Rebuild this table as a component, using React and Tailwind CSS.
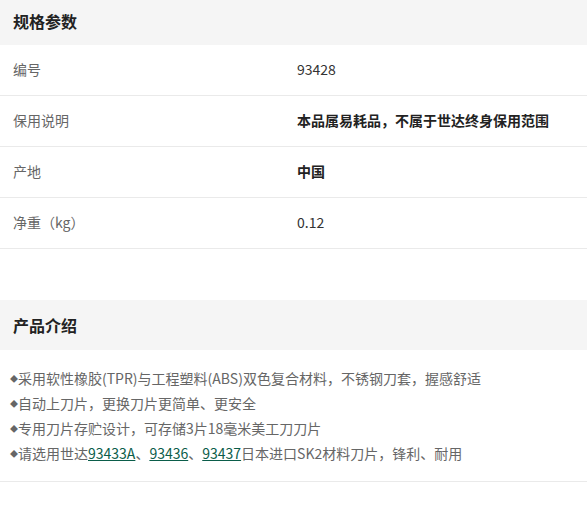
export default function App() {
  const rows = [
    ["编号", "93428", false],
    ["保用说明", "本品属易耗品，不属于世达终身保用范围", true],
    ["产地", "中国", true],
    ["净重（kg）", "0.12", false],
  ];
  const font = { fontFamily: '"Noto Sans CJK SC", "Noto Sans", sans-serif' };
  const Dot = () => <span className="inline-block text-[8px] leading-[8px] align-[2px]">◆</span>;
  return (
    <div className="w-[587px] bg-white" style={font}>
      <div className="h-[45px] bg-[#f5f5f5] flex items-center px-[13px] pb-[4px]">
        <span className="text-[16px] font-bold text-[#222]">规格参数</span>
      </div>
      {rows.map(([k, v, b]) => (
        <div key={k} className="h-[51px] flex items-center border-b border-[#eaeaea] pb-[1px]">
          <div className="w-[297px] pl-[13px] text-[14px] text-[#666]">{k}</div>
          <div className={"text-[14px] " + (b ? "font-bold text-[#222]" : "text-[#333]")}>{v}</div>
        </div>
      ))}
      <div className="h-[51px]" />
      <div className="h-[50px] bg-[#f5f5f5] flex items-center px-[13px]">
        <span className="text-[16px] font-bold text-[#222]">产品介绍</span>
      </div>
      <div className="pt-[16px] pb-[15px] px-[10px] text-[14px] text-[#666] leading-[25px] border-b border-[#eaeaea]">
        <div><Dot />采用软性橡胶(TPR)与工程塑料(ABS)双色复合材料，不锈钢刀套，握感舒适</div>
        <div><Dot />自动上刀片，更换刀片更简单、更安全</div>
        <div><Dot />专用刀片存贮设计，可存储3片18毫米美工刀刀片</div>
        <div>
          <Dot />请选用世达<span className="text-[#0b5d4a] underline">93433A</span>、<span className="text-[#0b5d4a] underline">93436</span>、<span className="text-[#0b5d4a] underline">93437</span>日本进口SK2材料刀片，锋利、耐用
        </div>
      </div>
    </div>
  );
}
